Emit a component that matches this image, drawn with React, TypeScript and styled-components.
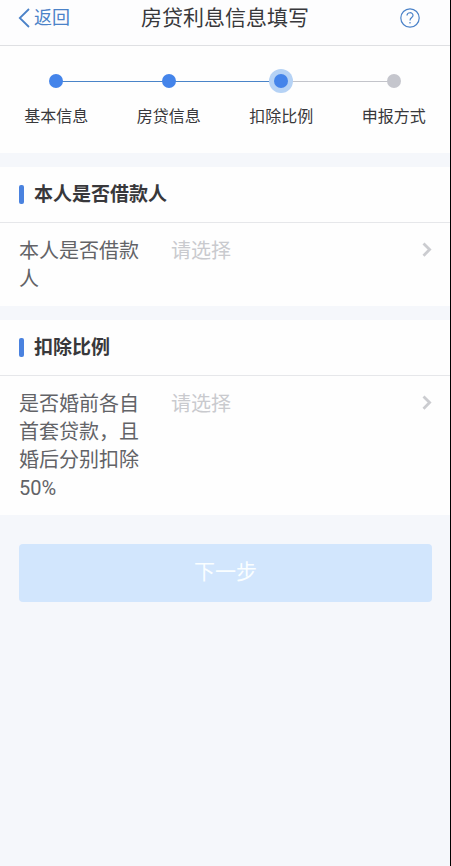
import React, { useState } from "react";
import styled, { createGlobalStyle, css } from "styled-components";

const GlobalStyle = createGlobalStyle`
  *, *::before, *::after { box-sizing: border-box; }
  body {
    margin: 0;
    background: #f5f7fb;
    color: #38383b;
    font-family: Roboto, "Noto Sans CJK SC", sans-serif;
  }
  button, select { font-family: inherit; }
  h1, h2, ol { margin: 0; padding: 0; }
`;

const Page = styled.main`
  min-height: 100vh;
  border-right: 1px solid #000;
  background: #f5f7fb;
`;

const Header = styled.header`
  display: grid;
  grid-template-columns: 1fr auto 1fr;
  align-items: center;
  height: 46px;
  padding: 0 18px 10px;
  border-bottom: 1px solid #dfe0e3;
  background: #fdfdfe;
`;

const IconButton = styled.button`
  display: flex;
  align-items: center;
  gap: 4px;
  padding: 0;
  border: 0;
  background: none;
  color: #4b82c8;
  font-size: 18px;
  line-height: 24px;
  cursor: pointer;
`;

const HelpButton = styled(IconButton)`
  justify-self: end;
  margin-right: 12px;
`;

const Title = styled.h1`
  font-size: 21px;
  line-height: 34px;
  font-weight: 400;
`;

const Steps = styled.ol`
  display: grid;
  grid-template-columns: repeat(4, 1fr);
  padding: 22px 0 24px;
  background: #fefefe;
  list-style: none;
`;

type StepState = "done" | "current" | "pending";

const Step = styled.li<{ $state: StepState }>`
  position: relative;
  display: flex;
  flex-direction: column;
  align-items: center;
  gap: 11px;
  font-size: 16px;
  line-height: 24px;

  &:not(:first-child)::before {
    content: "";
    position: absolute;
    top: 13px;
    right: 50%;
    width: 100%;
    height: 1px;
    background: ${({ $state }) => ($state === "pending" ? "#c3c4ca" : "#4a84c8")};
  }
`;

const DotSlot = styled.span`
  display: grid;
  place-items: center;
  height: 26px;
`;

const Dot = styled.span<{ $state: StepState }>`
  z-index: 1;
  width: 14px;
  height: 14px;
  border-radius: 50%;
  background: ${({ $state }) => ($state === "pending" ? "#c5c6cd" : "#4484ea")};
  ${({ $state }) =>
    $state === "current" &&
    css`
      box-shadow: 0 0 0 5px #b5d2f5;
    `}
`;

const Section = styled.section`
  margin-top: 14px;
  background: #fefefe;
`;

const SectionTitle = styled.h2`
  display: flex;
  align-items: center;
  gap: 10px;
  height: 56px;
  padding: 0 19px;
  border-bottom: 1px solid #e6e7ea;
  font-size: 19px;
  line-height: 28px;
  font-weight: 700;

  &::before {
    content: "";
    width: 5px;
    height: 19px;
    border-radius: 2px;
    background: #4a82df;
  }
`;

const Field = styled.div`
  display: grid;
  grid-template-columns: 120px 1fr auto;
  column-gap: 32px;
  align-items: start;
  padding: 14px 18px 13px 19px;
  font-size: 20px;
  line-height: 28px;
`;

const FieldLabel = styled.label`
  color: #626367;
`;

const Select = styled.select<{ $empty: boolean }>`
  width: 100%;
  height: 28px;
  padding: 0;
  border: 0;
  background: none;
  appearance: none;
  color: ${({ $empty }) => ($empty ? "#c9cace" : "#626367")};
  font-size: 20px;
  line-height: 28px;
`;

const Arrow = styled.svg`
  width: 10px;
  height: 27px;
`;

const Actions = styled.div`
  padding: 29px 18px 29px 19px;
`;

const NextButton = styled.button`
  width: 100%;
  height: 58px;
  padding: 0 0 2px;
  border: 0;
  border-radius: 4px;
  background: #d2e6fd;
  color: #fafeff;
  font-size: 21px;
  line-height: 28px;
`;

const steps: { label: string; state: StepState }[] = [
  { label: "基本信息", state: "done" },
  { label: "房贷信息", state: "done" },
  { label: "扣除比例", state: "current" },
  { label: "申报方式", state: "pending" },
];

const sections = [
  { id: "borrower", title: "本人是否借款人", label: "本人是否借款人" },
  { id: "ratio", title: "扣除比例", label: "是否婚前各自首套贷款，且婚后分别扣除50%" },
];

function ChoiceField({ id, label }: { id: string; label: string }) {
  const [value, setValue] = useState("");
  return (
    <Field>
      <FieldLabel htmlFor={id}>{label}</FieldLabel>
      <Select id={id} value={value} $empty={!value} onChange={(e) => setValue(e.target.value)}>
        <option value="">请选择</option>
        <option value="yes">是</option>
        <option value="no">否</option>
      </Select>
      <Arrow viewBox="0 0 10 27" fill="none" stroke="#cbccd0" strokeWidth="2.8" aria-hidden="true">
        <path d="M1.5 6.5 L7.6 12.6 L1.5 18.7" />
      </Arrow>
    </Field>
  );
}

export default function App() {
  return (
    <>
      <GlobalStyle />
      <Page>
        <Header>
          <IconButton type="button">
            <svg width="12" height="20" viewBox="0 0 12 20" fill="none" stroke="currentColor" strokeWidth="1.8" aria-hidden="true">
              <path d="M11 1 L1.8 10 L11 19" />
            </svg>
            返回
          </IconButton>
          <Title>房贷利息信息填写</Title>
          <HelpButton type="button" aria-label="帮助">
            <svg width="20" height="20" viewBox="0 0 20 20" fill="none" stroke="currentColor" strokeWidth="1.2" aria-hidden="true">
              <circle cx="10" cy="10" r="9.2" />
              <path d="M7 7.6 C7 3.8 13 3.8 13 7.4 C13 9.6 10 9.5 10 12.4" />
              <path d="M10 13.9 V15.4" />
            </svg>
          </HelpButton>
        </Header>
        <Steps>
          {steps.map(({ label, state }) => (
            <Step key={label} $state={state} aria-current={state === "current" ? "step" : undefined}>
              <DotSlot>
                <Dot $state={state} />
              </DotSlot>
              {label}
            </Step>
          ))}
        </Steps>
        {sections.map(({ id, title, label }) => (
          <Section key={id}>
            <SectionTitle>{title}</SectionTitle>
            <ChoiceField id={id} label={label} />
          </Section>
        ))}
        <Actions>
          <NextButton type="button" disabled>
            下一步
          </NextButton>
        </Actions>
      </Page>
    </>
  );
}
